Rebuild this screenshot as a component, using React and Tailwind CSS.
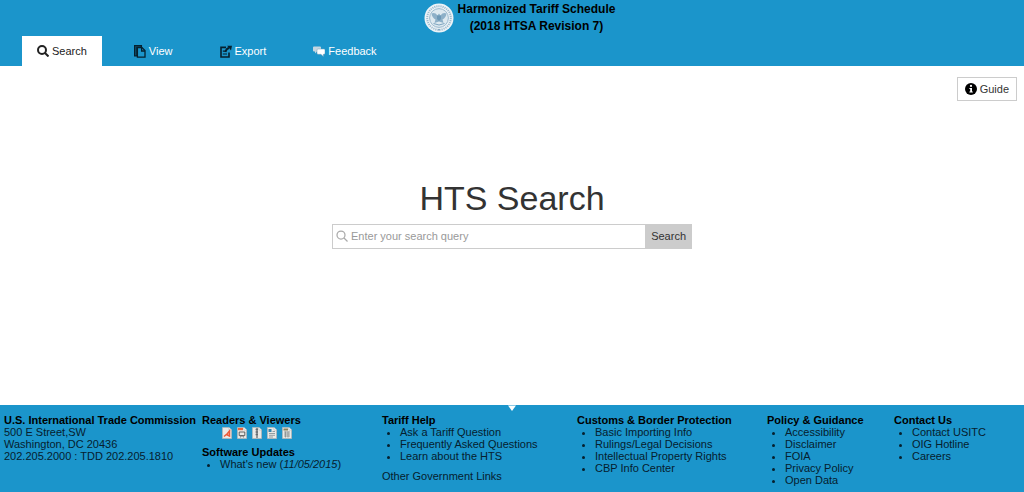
import React, { useState } from 'react';

const SearchIcon = ({ className }) => (
  <svg viewBox="0 0 24 24" className={className} fill="none" stroke="currentColor" aria-hidden="true">
    <circle cx="10" cy="10" r="8" />
    <path d="M16 16l7 7" />
  </svg>
);

const ViewIcon = () => (
  <svg viewBox="0 0 12 13" className="w-3 h-3.25 text-[#06202e]" fill="none" stroke="currentColor" strokeWidth="1.3" aria-hidden="true">
    <path d="M0.6 0.6H7.4V2.4H3V10.8H0.6Z" fill="currentColor" fillOpacity="0.55" />
    <path d="M3.4 2.6H8L11 5.6V12.2H3.4Z" />
    <path d="M7.6 2.6V6H11" />
  </svg>
);

const ExportIcon = () => (
  <svg viewBox="0 0 12 13" className="w-3 h-3.25 text-[#06202e]" fill="none" stroke="currentColor" strokeWidth="1.6" aria-hidden="true">
    <path d="M6 2.4H1V12H9V7.5" />
    <path d="M2.8 6.2H5.4M2.8 9H7" strokeWidth="1.2" />
    <path d="M5.4 7C6 4.7 7.3 3.3 9 3" strokeWidth="2" />
    <path d="M7.2 0.8L12 0.8L11 5.4Z" fill="currentColor" stroke="none" />
  </svg>
);

const FeedbackIcon = () => (
  <svg viewBox="0 0 12 11" className="w-3 h-2.75" aria-hidden="true">
    <path d="M1 0.5H7Q8 0.5 8 1.5V4.5Q8 5.5 7 5.5H4L2 7.6V5.5H1Q0 5.5 0 4.5V1.5Q0 0.5 1 0.5Z" fill="#c6d6e0" />
    <path d="M5 3H11Q12 3 12 4V7.3Q12 8.3 11 8.3H10.3V10.6L8 8.3H5Q4 8.3 4 7.3V4Q4 3 5 3Z" fill="#fff" stroke="#6f9cb8" strokeWidth="0.5" />
  </svg>
);

const InfoIcon = () => (
  <svg viewBox="0 0 12 12" className="w-3 h-3" aria-hidden="true">
    <circle cx="6" cy="6" r="6" fill="#000" />
    <circle cx="6" cy="2.9" r="1.1" fill="#fff" />
    <path d="M4.4 4.9H7V8.6H7.8V9.6H4.4V8.6H5.2V5.9H4.4Z" fill="#fff" />
  </svg>
);

const Seal = () => (
  <svg viewBox="0 0 30 30" className="w-7.5 h-7.5 shrink-0" role="img" aria-label="USITC seal">
    <circle cx="15" cy="15" r="14.5" fill="#edf3f7" />
    <circle cx="15" cy="15" r="11.8" fill="none" stroke="#9fbccf" strokeWidth="2" strokeDasharray="1.2 0.9" />
    <circle cx="15" cy="15" r="9.4" fill="#dde9f0" stroke="#86abc3" strokeWidth="0.8" />
    <path d="M7.5 10.5Q11 9 13.5 12.5L15 10.5L16.5 12.5Q19 9 22.5 10.5Q22 14.5 18.5 16.5L19.5 20L15 18.5L10.5 20L11.5 16.5Q8 14.5 7.5 10.5Z" fill="#8db0c8" />
    <path d="M13 12.5H17V16L15 18L13 16Z" fill="#6c98b6" />
    <path d="M9.5 20.5Q15 23.5 20.5 20.5" fill="none" stroke="#7ba3be" />
    <circle cx="15" cy="26.8" r="0.8" fill="#5f8fb0" />
  </svg>
);

const FileIcon = ({ children }) => (
  <svg viewBox="0 0 10 12" className="w-2.5 h-3" aria-hidden="true">
    <path d="M0.5 0.5H7L9.5 3V11.5H0.5Z" fill="#e9e9e6" stroke="#b5b8b8" strokeWidth="0.8" />
    <path d="M7 0.5V3H9.5" fill="#fff" stroke="#b5b8b8" strokeWidth="0.6" />
    {children}
  </svg>
);

const readers = [
  {
    name: 'PDF reader',
    mark: <path d="M2 9.5L5.5 6.5L7.5 4V9L4.5 7.5" fill="none" stroke="#ec5a38" strokeWidth="1.5" />,
  },
  {
    name: 'PowerPoint viewer',
    mark: (
      <>
        <path d="M1 1H6V3.2H1Z" fill="#f0653a" />
        <path d="M2.2 5H7.8V8.6H2.2ZM3.5 10.4L4.3 8.6M6.5 10.4L5.7 8.6" fill="none" stroke="#555" strokeWidth="0.9" />
      </>
    ),
  },
  {
    name: 'Zip reader',
    mark: <path d="M5 1V11M3.6 2.5H6M3.6 5H6M3.6 7.5H6" fill="none" stroke="#666c70" strokeWidth="1.3" />,
  },
  {
    name: 'Word viewer',
    mark: (
      <>
        <path d="M1.5 2H4.5V5H1.5Z" fill="#3584ad" />
        <path d="M5.5 4.5H8M2 6.5H8M2 8.3H8M2 10H6" stroke="#7e8a90" strokeWidth="0.8" />
      </>
    ),
  },
  {
    name: 'Excel viewer',
    mark: (
      <>
        <path d="M1.5 1.5H6V3.5H1.5Z" fill="#8a8059" />
        <path d="M2 5H8M2 7H8M2 9H8M3.5 4.5V10.5M6 4.5V10.5" stroke="#858a8c" strokeWidth="0.8" />
      </>
    ),
  },
];

const tabs = [
  { name: 'Search', icon: <SearchIcon className="w-3 h-3 stroke-[4]" /> },
  { name: 'View', icon: <ViewIcon /> },
  { name: 'Export', icon: <ExportIcon /> },
  { name: 'Feedback', icon: <FeedbackIcon /> },
];

const LinkList = ({ title, links }) => (
  <div>
    <h2 className="font-bold text-black">{title}</h2>
    <ul className="list-disc pl-[18px]">
      {links.map((link) => (
        <li key={link}>
          <a href="#" className="hover:underline">{link}</a>
        </li>
      ))}
    </ul>
  </div>
);

const App = () => {
  const [query, setQuery] = useState('');
  const [activeTab, setActiveTab] = useState('Search');

  return (
    <div className="min-h-screen flex flex-col bg-white text-[11px] text-[#333] font-['Liberation_Sans',Arial,sans-serif]">
      <header className="bg-[#1b95cb]">
        <div className="flex justify-center items-center gap-1 h-9 pl-[15px]">
          <Seal />
          <h1 className="text-center text-[12px] leading-[17px] font-bold text-black">
            Harmonized Tariff Schedule
            <br />
            (2018 HTSA Revision 7)
          </h1>
        </div>
        <nav className="flex gap-[17px] pl-[22px]">
          {tabs.map(({ name, icon }) => (
            <button
              key={name}
              type="button"
              onClick={() => setActiveTab(name)}
              className={`flex items-center gap-[3px] h-[30px] px-[15px] cursor-pointer ${
                activeTab === name ? 'bg-white text-[#222]' : 'text-white'
              }`}
            >
              {icon}
              {name}
            </button>
          ))}
        </nav>
      </header>

      <main className="flex-1 flex flex-col">
        <div className="flex justify-end pt-[11px] pr-[7px]">
          <button type="button" className="flex items-center gap-[3px] h-6 px-[7px] border border-[#ccc] cursor-pointer">
            <InfoIcon />
            Guide
          </button>
        </div>
        <div className="flex-1 flex flex-col items-center justify-center pb-20">
          <h2 className="text-[34px] leading-10 mb-1.5">HTS Search</h2>
          <form onSubmit={(e) => e.preventDefault()} className="flex w-full max-w-[360px] h-[25px]">
            <label className="flex flex-1 items-center gap-[3px] pl-[3px] border border-r-0 border-[#ccc]">
              <SearchIcon className="w-3 h-3 stroke-[2.5] text-[#aaa]" />
              <input
                type="text"
                aria-label="Search query"
                placeholder="Enter your search query"
                value={query}
                onChange={(e) => setQuery(e.target.value)}
                className="flex-1 min-w-0 outline-none placeholder:text-[#999]"
              />
            </label>
            <button type="submit" className="px-1.5 bg-[#ccc] cursor-pointer">
              Search
            </button>
          </form>
        </div>
      </main>

      <footer className="bg-[#1b95cb] text-[#06202e] leading-3">
        <div className="flex justify-center h-[9px]">
          <svg viewBox="0 0 8 6" className="w-2 h-1.5" aria-hidden="true">
            <path d="M0 0.5H8L4 6Z" fill="#fff" />
          </svg>
        </div>
        <div className="grid grid-cols-[198fr_180fr_195fr_190fr_127fr_130fr] pl-1 pb-1.5">
          <div>
            <h2 className="font-bold text-black">U.S. International Trade Commission</h2>
            <p>500 E Street,SW</p>
            <p>Washington, DC 20436</p>
            <p>202.205.2000 : TDD 202.205.1810</p>
          </div>
          <div>
            <h2 className="font-bold text-black">Readers &amp; Viewers</h2>
            <div className="flex gap-[5px] pl-5 pt-px mb-[7px]">
              {readers.map(({ name, mark }) => (
                <a key={name} href="#" aria-label={name}>
                  <FileIcon>{mark}</FileIcon>
                </a>
              ))}
            </div>
            <h2 className="font-bold text-black">Software Updates</h2>
            <ul className="list-disc pl-[18px]">
              <li>
                <a href="#">What's new (<em>11/05/2015</em>)</a>
              </li>
            </ul>
          </div>
          <div>
            <LinkList title="Tariff Help" links={['Ask a Tariff Question', 'Frequently Asked Questions', 'Learn about the HTS']} />
            <a href="#" className="block mt-2">Other Government Links</a>
          </div>
          <LinkList
            title="Customs & Border Protection"
            links={['Basic Importing Info', 'Rulings/Legal Decisions', 'Intellectual Property Rights', 'CBP Info Center']}
          />
          <LinkList
            title="Policy & Guidance"
            links={['Accessibility', 'Disclaimer', 'FOIA', 'Privacy Policy', 'Open Data']}
          />
          <LinkList title="Contact Us" links={['Contact USITC', 'OIG Hotline', 'Careers']} />
        </div>
      </footer>
    </div>
  );
};

export default App;
